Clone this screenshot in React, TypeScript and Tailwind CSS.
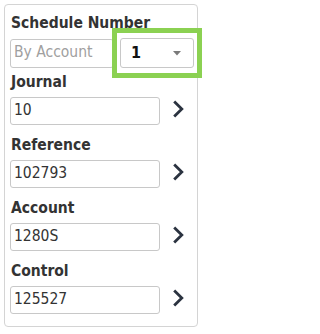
import React from "react";

const font = { fontFamily: '"DejaVu Sans Condensed", "DejaVu Sans", Verdana, sans-serif', fontStretch: "condensed" as const };

function Chevron() {
  return (
    <svg width="12" height="18" viewBox="0 0 12 18" className="shrink-0">
      <polyline points="2.2,1.5 9.8,9 2.2,16.5" fill="none" stroke="#2b3340" strokeWidth="2.8" strokeLinecap="butt" strokeLinejoin="miter" />
    </svg>
  );
}

function Field({ label, value, first }: { label: string; value: string; first?: boolean }) {
  return (
    <div className={first ? "mt-[6px]" : "mt-[12px]"}>
      <div className="ml-[1px] text-[15.5px] leading-[17px] font-bold text-[#333]">{label}</div>
      <div className="mt-[6px] flex items-center">
        <div className="w-[150px] h-[28px] border border-[#c8c8c8] rounded-[3px] bg-white flex items-center pl-[3px] text-[15.5px] text-[#333] shrink-0">
          {value}
        </div>
        <div className="ml-[12px] -mt-[4px] flex items-center">
          <Chevron />
        </div>
      </div>
    </div>
  );
}

export default function App() {
  return (
    <div className="w-[202px] h-[334px] bg-white overflow-hidden pt-[4px] pl-[4px]" style={font}>
      <div className="w-[194px] h-[323px] border border-[#d4d4d4] rounded-[4px] pt-[10px] pl-[5px]">
        <div className="ml-[1px] text-[15.5px] leading-[17px] font-bold text-[#333]">Schedule Number</div>
        <div className="mt-[6px] flex items-center">
          <div className="w-[104px] h-[29px] border border-[#c8c8c8] rounded-[3px] flex items-center pl-[3px] text-[15.5px] text-[#a0a0a0] shrink-0">
            By Account
          </div>
          <div className="-ml-[2px] -my-[10px] border-[5px] border-[#8bd152] px-[3px] py-[5px] shrink-0 bg-white">
            <div className="w-[74px] h-[30px] border border-[#c8c8c8] rounded-[3px] flex items-center justify-between pl-[10px] pr-[12px]">
              <span className="text-[16px] font-bold text-[#111]">1</span>
              <svg width="8" height="5" viewBox="0 0 8 5">
                <polygon points="0,0 8,0 4,4.5" fill="#7a7a7a" />
              </svg>
            </div>
          </div>
        </div>
        <Field label="Journal" value="10" first />
        <Field label="Reference" value="102793" />
        <Field label="Account" value="1280S" />
        <Field label="Control" value="125527" />
      </div>
    </div>
  );
}
